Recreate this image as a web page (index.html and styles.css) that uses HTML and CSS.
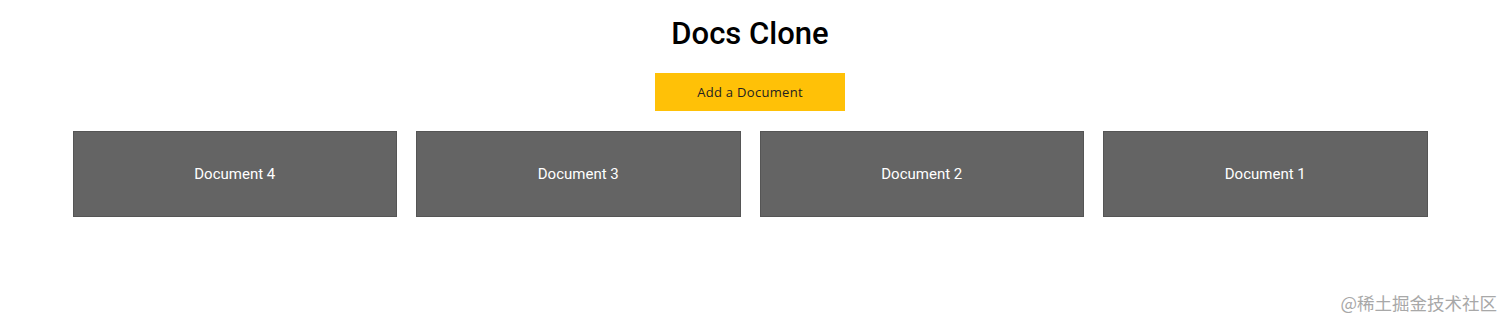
FILE: index.html
```html
<!DOCTYPE html>
<html lang="en">
<head>
    <meta charset="UTF-8">
    <meta name="viewport" content="width=device-width, initial-scale=1.0">
    <title>Docs Clone</title>
    <link rel="stylesheet" href="styles.css">
</head>
<body>

    <div class="app">
        <h1 class="app-title">Docs Clone</h1>
        <button class="add-doc-btn">Add a Document</button>

        <div class="doc-grid">
            <div class="doc-card">Document 4</div>
            <div class="doc-card">Document 3</div>
            <div class="doc-card">Document 2</div>
            <div class="doc-card">Document 1</div>
        </div>
    </div>

    <div class="watermark">@稀土掘金技术社区</div>

</body>
</html>
```

FILE: styles.css
```css
:root {
    --accent-color: #ffc107;
    --card-color: #646464;
    --card-border: #555555;
    --text-color: #000000;
}

body {
    margin: 0;
    font-family: Roboto, "Noto Sans", sans-serif;
    background-color: #ffffff;
    color: var(--text-color);
    height: 328px;
    overflow: hidden;
}

.app {
    width: 1500px;
    display: flex;
    flex-direction: column;
    align-items: center;
}

.app-title {
    margin: 15px 0 0 0;
    font-size: 31px;
    font-weight: 500;
    line-height: 37px;
}

.add-doc-btn {
    margin-top: 21px;
    width: 190px;
    height: 38px;
    border: none;
    background-color: var(--accent-color);
    color: #222222;
    font-family: "Open Sans", sans-serif;
    font-size: 13px;
    letter-spacing: 0.3px;
    cursor: pointer;
}

.doc-grid {
    margin-top: 20px;
    width: 1355px;
    display: grid;
    grid-template-columns: repeat(4, 1fr);
    gap: 19px;
}

.doc-card {
    height: 84px;
    background-color: var(--card-color);
    border: 1px solid var(--card-border);
    color: #ffffff;
    font-size: 15px;
    display: flex;
    align-items: center;
    justify-content: center;
}

.watermark {
    position: absolute;
    right: 15px;
    bottom: 13px;
    font-family: "Noto Sans CJK SC", sans-serif;
    font-size: 17.5px;
    color: #a8a8a8;
}
```
